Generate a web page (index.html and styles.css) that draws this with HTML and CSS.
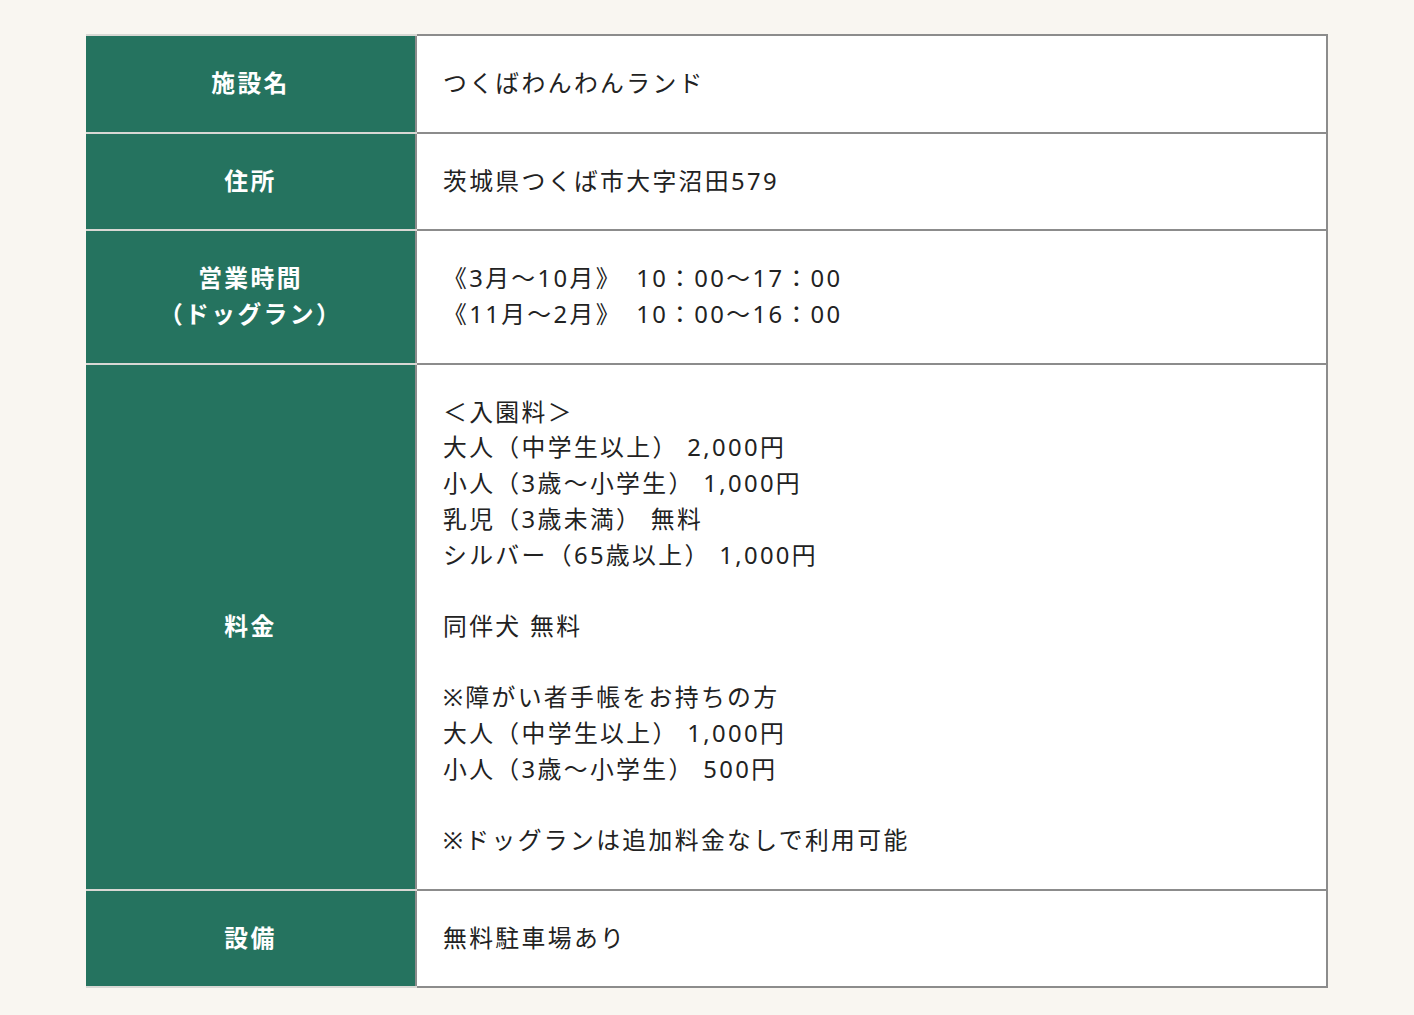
FILE: index.html
```html
<!DOCTYPE html>
<html lang="ja">
<head>
<meta charset="utf-8">
<link rel="stylesheet" href="styles.css">
</head>
<body>
<table class="info">
  <tr><th>施設名</th><td>つくばわんわんランド</td></tr>
  <tr><th>住所</th><td>茨城県つくば市大字沼田579</td></tr>
  <tr><th>営業時間<br>（ドッグラン）</th><td>《3月～10月》　10：00～17：00<br>《11月～2月》　10：00～16：00</td></tr>
  <tr><th>料金</th><td>＜入園料＞<br>大人（中学生以上） 2,000円<br>小人（3歳～小学生） 1,000円<br>乳児（3歳未満） 無料<br>シルバー（65歳以上） 1,000円<br><br>同伴犬 無料<br><br>※障がい者手帳をお持ちの方<br>大人（中学生以上） 1,000円<br>小人（3歳～小学生） 500円<br><br>※ドッグランは追加料金なしで利用可能</td></tr>
  <tr><th>設備</th><td>無料駐車場あり</td></tr>
</table>
</body>
</html>
```
FILE: styles.css
```css
html, body {
  margin: 0;
  padding: 0;
  background: #f9f6f1;
}
body {
  padding: 34px 86px 26px;
  font-family: "Noto Sans", "Noto Sans CJK JP", sans-serif;
  color: #222;
}
.info {
  width: 100%;
  border-collapse: collapse;
  font-size: 23.8px;
  line-height: 1.5;
  letter-spacing: 0.1em;
}
.info th {
  width: 309px;
  background: #25735f;
  color: #fff;
  font-weight: 700;
  text-align: center;
  vertical-align: middle;
  border-top: 2px solid #d8d8d4;
  border-bottom: 2px solid #d8d8d4;
  border-left: none;
  padding: 30px 10px;
}
.info td {
  background: #fff;
  border: 2px solid #8c8c8c;
  padding: 30px 26px;
  vertical-align: middle;
  text-align: left;
}
```
